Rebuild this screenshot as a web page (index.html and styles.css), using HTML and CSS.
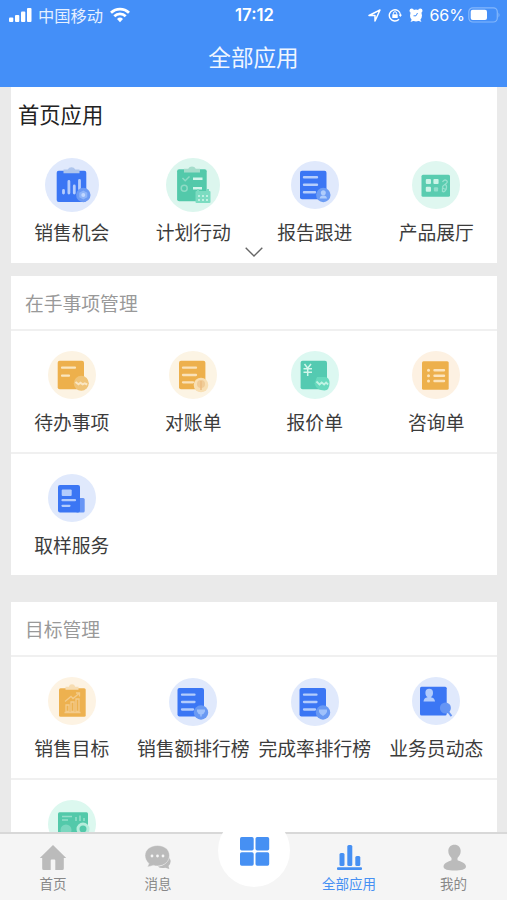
FILE: index.html
```html
<!DOCTYPE html>
<html lang="zh-CN">
<head>
<meta charset="utf-8">
<title>全部应用</title>
<link rel="stylesheet" href="styles.css">
</head>
<body>
<div class="app">
  <header class="header">
    <div class="status">
      <div class="status-left">
        <svg width="24" height="16" viewBox="0 0 24 16" fill="#fff"><rect x="0" y="10.500" width="4.300" height="4.500" rx="1"/><rect x="6" y="8" width="4.300" height="7" rx="1"/><rect x="12" y="4.500" width="4.300" height="10.500" rx="1"/><rect x="18" y="1" width="4.500" height="14" rx="1"/></svg>
        <span class="carrier">中国移动</span>
        <svg width="20" height="16" viewBox="0 0 20 16" fill="none" stroke="#fff" stroke-width="2.700"><path d="M1 5.800a12.700 12.700 0 0 1 18 0"/><path d="M4.300 9.300a8 8 0 0 1 11.400 0"/><path d="M10 15.200l-3-3.200a4.300 4.300 0 0 1 6 0z" fill="#fff" stroke="none"/></svg>
      </div>
      <span class="time">17:12</span>
      <div class="status-right">
        <svg width="13" height="13" viewBox="0 0 13 13" fill="none" stroke="#fff" stroke-width="1.500" stroke-linejoin="round"><path d="M1 6.500L12 1 7 12V6.500z"/></svg>
        <svg width="14" height="14" viewBox="0 0 14 14" fill="none" stroke="#fff" stroke-width="1.400"><path d="M11 11.200A5.600 5.600 0 1 1 12.500 7"/><path d="M10.700 6.700h3.300l-1.600 2.200z" fill="#fff" stroke="none"/><rect x="4.300" y="6.300" width="5.400" height="3.700" fill="#fff" stroke="none"/><path d="M5.400 6.500V5.300a1.600 1.600 0 0 1 3.200 0v1.200" stroke-width="1"/></svg>
        <svg width="14" height="14" viewBox="0 0 14 14"><g fill="#fff"><circle cx="7" cy="7.500" r="6"/><circle cx="2.700" cy="2.700" r="2.200"/><circle cx="11.300" cy="2.700" r="2.200"/><path d="M1.500 14l1.500-3 2.500 1.500zM12.500 14l-1.500-3-2.500 1.500z"/></g><path d="M8.500 5L7 7.800H4.500" fill="none" stroke="#448ff8" stroke-width="1"/></svg>
        <span class="percent">66%</span>
        <svg width="32" height="16" viewBox="0 0 32 16"><rect x=".8" y=".8" width="28.500" height="14.200" rx="4" fill="none" stroke="#84b7fb" stroke-width="1.200"/><rect x="2.700" y="2.700" width="16.300" height="10.400" rx="2" fill="#fff"/><path d="M30.500 5.500q2 2.500 0 5z" fill="#84b7fb"/></svg>
      </div>
    </div>
    <h1 class="title">全部应用</h1>
  </header>

  <main class="content">
    <section class="card card-home">
      <h2 class="home-title">首页应用</h2>
      <div class="row">
        <div class="item">
          <svg class="icon" viewBox="0 0 54 54"><circle cx="27" cy="27" r="27" fill="#e0e9fc"/><rect x="11.700" y="12.700" width="29.600" height="31.300" rx="2" fill="#3b76f4"/><path d="M18.500 15.300v-3.800h4.200a4.300 4.300 0 0 1 7.600 0h4.200v3.800z" fill="#aec5ed"/><g stroke="#b5cdfc" stroke-width="2.800" stroke-linecap="round"><path d="M18.500 32.500v2.500M23.900 23.500V35M29.300 28v7M34.500 22.500V31"/></g><circle cx="38.300" cy="37" r="7.200" fill="#6c9af4"/><path d="M38.300 32.500l4 2.200v4.600l-4 2.200-4-2.200v-4.600z" fill="#8eb4f9"/><circle cx="38.300" cy="37" r="2" fill="#c1d7ff"/></svg>
          <span class="label">销售机会</span>
        </div>
        <div class="item">
          <svg class="icon" viewBox="0 0 54 54"><circle cx="27" cy="27" r="27" fill="#dcf6ee"/><rect x="11.100" y="11.300" width="29.600" height="32" rx="2" fill="#53c9aa"/><path d="M18 14.500v-3.800h4.200a4.300 4.300 0 0 1 7.600 0H34v3.800z" fill="#a5ddcb"/><g fill="none" stroke-width="1.500"><path d="M16.500 20l2.700 2.700 4.300-4.200" stroke="#8edbc5"/><circle cx="18.200" cy="30.300" r="3" stroke="#8edbc5"/><path d="M27 20.700h9.500M27 30.300h9" stroke="#d4f5eb" stroke-width="2.400"/></g><rect x="29.500" y="33" width="15" height="12" rx="1" fill="#7cdcc1"/><path d="M32 31v3M42 31v3" stroke="#7cdcc1" stroke-width="2"/><path d="M32 38h10M32 42h10" stroke="#d5f6ec" stroke-width="1.700" stroke-dasharray="2 2"/></svg>
          <span class="label">计划行动</span>
        </div>
        <div class="item">
          <svg class="icon" viewBox="0 0 54 54"><circle cx="27" cy="27" r="24" fill="#e0e9fc"/><rect x="12" y="12.700" width="26.500" height="28.500" rx="2" fill="#3b76f4"/><path d="M16 19.300h13M16 26.700h13M16 34.300h11" stroke="#b5cdfc" stroke-width="2.400" stroke-linecap="round"/><circle cx="35.300" cy="37" r="7.200" fill="#6c9cf4"/><circle cx="35.300" cy="34.700" r="2.500" fill="#b0cdfc"/><path d="M31.500 40.500q.5-2.600 2.600-3h2.400q2.100.4 2.600 3z" fill="#b0cdfc"/></svg>
          <span class="label">报告跟进</span>
        </div>
        <div class="item">
          <svg class="icon" viewBox="0 0 54 54"><circle cx="27" cy="27" r="24" fill="#dff7f0"/><rect x="12.500" y="16.700" width="28.500" height="22" rx="1.500" fill="#5accb0"/><g fill="#ccf4e8"><rect x="16.800" y="21" width="5.200" height="5" rx="1"/><rect x="24.400" y="21" width="5.200" height="5" rx="1"/><rect x="16.800" y="28.700" width="5.200" height="5" rx="1"/></g><rect x="24.900" y="29.200" width="4.200" height="4.200" rx="1" fill="#91decb"/><g fill="none" stroke="#98e1cf" stroke-width="1.300"><path d="M33.500 24q2-3 4-1.500t-1 3.500-3 3 2 2 2-2-2-2M33.500 30v3.500q2 1 4-2.500"/></g></svg>
          <span class="label">产品展厅</span>
        </div>
      </div>
      <svg class="expand" viewBox="0 0 18 10" fill="none" stroke="#666" stroke-width="1.400"><path d="M.7.700L9 9 17.300.700"/></svg>
    </section>

    <section class="card card-tasks">
      <h2 class="section-title">在手事项管理</h2>
      <div class="row">
        <div class="item">
          <svg class="icon" viewBox="0 0 54 54"><circle cx="27" cy="27" r="24" fill="#fcf3e3"/><rect x="12.700" y="12.700" width="26.300" height="28.500" rx="2" fill="#edb04c"/><path d="M17 19.700h13M17 27.700h7" stroke="#fae6bf" stroke-width="2.200" stroke-linecap="round"/><circle cx="36.300" cy="35.300" r="7.500" fill="#f0c478"/><path d="M30.500 34l3 2.300 2-1.500 2.200 1.500 2-1 2.500 1.200" fill="none" stroke="#fae6c2" stroke-width="2"/></svg>
          <span class="label">待办事项</span>
        </div>
        <div class="item">
          <svg class="icon" viewBox="0 0 54 54"><circle cx="27" cy="27" r="24" fill="#fcf4e4"/><rect x="13" y="12.700" width="26.400" height="28.500" rx="2" fill="#edb04c"/><path d="M17 19.700h13M17 27h13M17 34.300h10" stroke="#fae2b9" stroke-width="2.300" stroke-linecap="round"/><circle cx="35" cy="37" r="7.300" fill="#f8dfb3"/><circle cx="35" cy="36" r="4" fill="#f0cb96"/><path d="M35 33v9" stroke="#edbd80" stroke-width="1.500"/></svg>
          <span class="label">对账单</span>
        </div>
        <div class="item">
          <svg class="icon" viewBox="0 0 54 54"><circle cx="27" cy="27" r="24" fill="#dcf8f1"/><rect x="12.600" y="12.700" width="26.400" height="28.500" rx="2" fill="#54cab1"/><path d="M16.500 16l3.200 4.200L23 16M15.500 20.700h8.500M15.500 24.200h8.500M19.700 20v8" fill="none" stroke="#d3f6eb" stroke-width="1.500"/><path d="M29 29h8q4.500 0 4.500 6.500t-5 7q-8 0-10-7z" fill="#68d9bd"/><path d="M28.500 33.500l3 3 2.200-2 2.400 2 2-2 2 2" fill="none" stroke="#c1f3e4" stroke-width="1.800"/></svg>
          <span class="label">报价单</span>
        </div>
        <div class="item">
          <svg class="icon" viewBox="0 0 54 54"><circle cx="27" cy="27" r="24" fill="#fdf1e2"/><rect x="13" y="13.300" width="26.700" height="28.500" rx="1.500" fill="#edb04c"/><path d="M25.500 22.300h9.500M25.500 27.700h9.500M25.500 33h9.500" stroke="#fce4bc" stroke-width="2.400" stroke-linecap="round"/><g fill="#fce4bc"><circle cx="19.500" cy="22.300" r="1.500"/><circle cx="19.500" cy="27.700" r="1.500"/><circle cx="19.500" cy="33" r="1.500"/></g></svg>
          <span class="label">咨询单</span>
        </div>
      </div>
      <div class="row">
        <div class="item">
          <svg class="icon" viewBox="0 0 54 54"><circle cx="27" cy="27" r="24" fill="#e0e9fc"/><rect x="31" y="27" width="8.700" height="14.500" rx="1.500" fill="#6795f5"/><rect x="13" y="14" width="22" height="27.500" rx="2" fill="#3b76f4"/><rect x="16.700" y="18.500" width="10" height="6.500" rx="1" fill="#b3ccfc"/><path d="M17.500 29.200H30M17.500 34.800h7" stroke="#b3ccfc" stroke-width="2.200" stroke-linecap="round"/></svg>
          <span class="label">取样服务</span>
        </div>
      </div>
    </section>

    <section class="card card-goals">
      <h2 class="section-title">目标管理</h2>
      <div class="row">
        <div class="item">
          <svg class="icon" viewBox="0 0 54 54"><circle cx="27" cy="27" r="24" fill="#fdf3e3"/><rect x="14" y="14.200" width="26.700" height="28.500" rx="1.500" fill="#edb14f"/><path d="M20.500 15.700v-3h3.300a3.300 3.300 0 0 1 6.400 0h3.300v3z" fill="#f7ddb2"/><g fill="none" stroke="#f3cb8b" stroke-width="1.300"><path d="M21 31h3v6.500h-3zM26 28h3v9.500h-3zM31 25h3v12.500h-3zM20 27.500l6-5 2 2 6-5M31 19h3.500v3.500M19.500 38.500h16"/></g></svg>
          <span class="label">销售目标</span>
        </div>
        <div class="item">
          <svg class="icon" viewBox="0 0 54 54"><circle cx="27" cy="28" r="24" fill="#e0e9fc"/><rect x="11.500" y="14" width="26.500" height="28.500" rx="2" fill="#3b76f4"/><path d="M16 20.700h12.500M16 28h12.500M16 35.500h11" stroke="#b3ccfc" stroke-width="2.300" stroke-linecap="round"/><circle cx="35" cy="38.500" r="7.200" fill="#6999f3"/><path d="M31 35.500h8v2q-1 2.500-3.300 3v2h-1.400v-2q-2.300-.5-3.300-3z" fill="#9fc1fb"/></svg>
          <span class="label">销售额排行榜</span>
        </div>
        <div class="item">
          <svg class="icon" viewBox="0 0 54 54"><circle cx="27" cy="28" r="24" fill="#e0e9fc"/><rect x="11.500" y="14" width="26.500" height="28.500" rx="2" fill="#3b76f4"/><path d="M16 20.700h12.500M16 28h12.500M16 35.500h11" stroke="#b3ccfc" stroke-width="2.300" stroke-linecap="round"/><circle cx="35" cy="38.500" r="7.200" fill="#6999f3"/><path d="M31 35.500h8v2.500q-1 2.500-4 4-3-1.500-4-4z" fill="#9fc1fb"/></svg>
          <span class="label">完成率排行榜</span>
        </div>
        <div class="item">
          <svg class="icon" viewBox="0 0 54 54"><circle cx="27" cy="27" r="24" fill="#e0e9fc"/><rect x="11" y="12.700" width="26.700" height="28.700" rx="1.500" fill="#3b76f4"/><ellipse cx="20.200" cy="19" rx="3.800" ry="4.200" fill="#b3ccfc"/><path d="M14.500 27.500q.3-3.700 4-4.300v-2h3.400v2q3.700.6 4.200 4.300z" fill="#b3ccfc"/><circle cx="36.400" cy="34" r="5.500" fill="#6595f4"/><path d="M39 37.700l3.500 4.500" stroke="#6595f4" stroke-width="1.900"/></svg>
          <span class="label">业务员动态</span>
        </div>
      </div>
      <div class="row">
        <div class="item">
          <svg class="icon" viewBox="0 0 54 54"><circle cx="27" cy="27" r="24" fill="#dcf8ef"/><rect x="13" y="15.300" width="30" height="26" rx="1.500" fill="#53c9aa"/><path d="M17 19.500h10M17 23h6M31 20v4M35 18.500V24M39 21v3" stroke="#95dfca" stroke-width="1.500"/><circle cx="21" cy="33" r="5.500" fill="#7bd7bf"/><circle cx="38" cy="32" r="5" fill="none" stroke="#b6eddc" stroke-width="3"/></svg>
        </div>
      </div>
    </section>
  </main>

  <nav class="tabbar">
    <div class="tab">
      <svg class="tab-icon" viewBox="0 0 28 28" fill="#bbb"><path d="M14 1L.8 14h2.400v10.500q0 1.500 1.500 1.500h7v-9.500q0-1 1-1h2.600q1 0 1 1V26h7q1.500 0 1.500-1.500V14h2.400z"/></svg>
      <span>首页</span>
    </div>
    <div class="tab">
      <svg class="tab-icon" viewBox="0 0 28 28"><path d="M25 13.500q3.500 4.500-.5 8.500l.8 3-4-1.300q-5 1-7.500-1.200Q22 22 25 13.500z" fill="#bbb"/><path d="M13.500 1.500c7 0 12 4.200 12 10s-5 10.500-12 10.500q-2 0-4-.6L3.500 23l1.300-3.600C2.500 17.500 1 14.500 1 11.500c0-5.800 5.500-10 12.500-10z" fill="#bbb" stroke="#f5f5f5" stroke-width=".5"/><g fill="#f5f5f5"><circle cx="8" cy="12" r="1.400"/><circle cx="13.500" cy="12" r="1.400"/><circle cx="19" cy="12" r="1.400"/></g></svg>
      <span>消息</span>
    </div>
    <div class="tab-center">
      <div class="fab">
        <svg width="30" height="30" viewBox="0 0 30 30" fill="#4690f3"><rect width="13.700" height="13.500" rx="1.700"/><rect x="15.500" width="13.700" height="13.500" rx="1.700"/><rect y="15.300" width="13.700" height="13.500" rx="1.700"/><rect x="15.500" y="15.300" width="13.700" height="13.500" rx="1.700"/></svg>
      </div>
    </div>
    <div class="tab tab-active">
      <svg class="tab-icon" viewBox="0 0 28 28" fill="#4690f3"><rect x="4.500" y="9" width="5" height="13" rx="1.500"/><rect x="12.300" y="1" width="5" height="21" rx="1.500"/><rect x="20.300" y="12" width="5" height="10" rx="1.500"/><rect x="2" y="23.300" width="25" height="2.700" rx="1"/></svg>
      <span>全部应用</span>
    </div>
    <div class="tab">
      <svg class="tab-icon" viewBox="0 0 28 28" fill="#bbb"><path d="M14.500.800c3.800 0 6.200 2.700 6.200 6.300 0 3.200-1.500 5.300-3.200 6.800v2.200c0 1 8.500 2 8.500 6.400 0 3-5 4-11.500 4S3.500 25.500 3.500 22.500c0-4.400 8-5.400 8-6.400v-2.200c-1.700-1.500-3.200-3.600-3.200-6.800 0-3.600 2.400-6.300 6.200-6.300z"/></svg>
      <span>我的</span>
    </div>
  </nav>
</div>
</body>
</html>
```

FILE: styles.css
```css
* {
  box-sizing: border-box;
}

body {
  margin: 0;
  font-family: "Noto Sans CJK SC", sans-serif;
  color: #3c3c3c;
}

svg {
  display: block;
  flex: none;
}

h1,
h2 {
  margin: 0;
  font-weight: 400;
}

.app {
  display: flex;
  flex-direction: column;
  width: 507px;
  height: 900px;
  overflow: hidden;
  background: #eaeaea;
}

.header {
  flex: none;
  height: 87px;
  background: #448ff8;
  color: #fff;
}

.status {
  display: grid;
  grid-template-columns: 1fr auto 1fr;
  align-items: center;
  height: 30px;
  padding: 0 7px 0 9px;
}

.status-left,
.status-right {
  display: flex;
  align-items: center;
}

.status-right {
  justify-content: flex-end;
}

.carrier {
  margin: 0 7px 0 5px;
  font-size: 16.3px;
  line-height: 28px;
  color: #e6f0ff;
}

.time {
  font-family: Inter, sans-serif;
  font-size: 16.7px;
  font-weight: 600;
}

.status-right svg:nth-child(-n + 2) {
  margin-right: 7px;
}

.percent {
  margin: 0 3px 0 6px;
  font-family: Inter, sans-serif;
  font-size: 16px;
}

.title {
  font-size: 22.6px;
  line-height: 54px;
  text-align: center;
  color: #f0f6ff;
}

.content {
  flex: 1;
  min-height: 0;
  padding: 0 10px 0 11px;
  overflow: hidden;
}

.card {
  background: #fff;
}

.card-home {
  position: relative;
  height: 176px;
  margin-bottom: 13px;
}

.card-tasks {
  height: 299px;
  margin-bottom: 27px;
}

.home-title {
  height: 54px;
  padding-left: 7px;
  font-size: 21.3px;
  line-height: 54px;
  color: #222;
}

.section-title {
  height: 55px;
  padding-left: 14px;
  border-bottom: 2px solid #f0f0f0;
  font-size: 18.8px;
  line-height: 53px;
  color: #999;
}

.row {
  display: grid;
  grid-template-columns: repeat(4, 1fr);
  height: 123px;
  padding-top: 17px;
  border-bottom: 2px solid #f0f0f0;
}

.row:last-of-type {
  border-bottom: 0;
}

.item {
  display: flex;
  flex-direction: column;
  align-items: center;
  gap: 7px;
}

.icon {
  width: 54px;
  height: 54px;
}

.label {
  font-size: 18.8px;
  line-height: 26px;
  white-space: nowrap;
}

.expand {
  position: absolute;
  left: 234px;
  top: 160px;
  width: 18px;
  height: 10px;
}

.tabbar {
  display: grid;
  flex: none;
  grid-template-columns: 106px 104px 88px 102px 107px;
  height: 68px;
  border-top: 2px solid #d8d8d8;
  background: #f5f5f5;
}

.tab {
  display: flex;
  flex-direction: column;
  align-items: center;
  padding-top: 10px;
  font-size: 13.5px;
  line-height: 20px;
  color: #888;
}

.tab-icon {
  width: 28px;
  height: 28px;
  margin-bottom: 1px;
}

.tab-active {
  color: #4690f3;
}

.tab-center {
  display: flex;
  justify-content: center;
}

.fab {
  display: flex;
  flex: none;
  align-items: center;
  justify-content: center;
  width: 72px;
  height: 73px;
  margin-top: -20px;
  padding: 2px 0 0 2px;
  border-radius: 50%;
  background: #fff;
}
```
